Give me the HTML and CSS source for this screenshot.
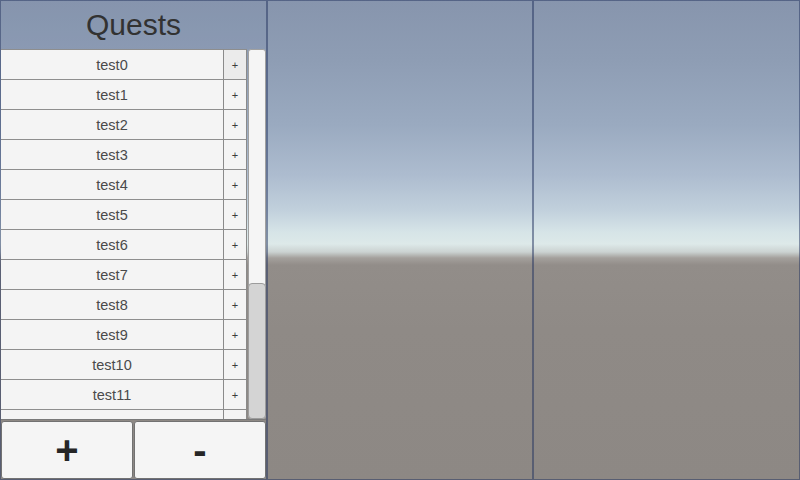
FILE: index.html
```html
<!DOCTYPE html>
<html>
<head>
<meta charset="utf-8">
<link rel="stylesheet" href="styles.css">
</head>
<body>
<div class="screen">
  <section class="panel quests">
    <header class="title">Quests</header>
    <div class="scroll">
      <div class="list">
        <div class="row"><div class="name">test0</div><div class="add first">+</div></div>
        <div class="row"><div class="name">test1</div><div class="add">+</div></div>
        <div class="row"><div class="name">test2</div><div class="add">+</div></div>
        <div class="row"><div class="name">test3</div><div class="add">+</div></div>
        <div class="row"><div class="name">test4</div><div class="add">+</div></div>
        <div class="row"><div class="name">test5</div><div class="add">+</div></div>
        <div class="row"><div class="name">test6</div><div class="add">+</div></div>
        <div class="row"><div class="name">test7</div><div class="add">+</div></div>
        <div class="row"><div class="name">test8</div><div class="add">+</div></div>
        <div class="row"><div class="name">test9</div><div class="add">+</div></div>
        <div class="row"><div class="name">test10</div><div class="add">+</div></div>
        <div class="row"><div class="name">test11</div><div class="add">+</div></div>
        <div class="row"><div class="name"></div><div class="add"></div></div>
      </div>
      <div class="scrollbar"><div class="track"></div><div class="handle"></div></div>
    </div>
    <div class="actions">
      <div class="btn">+</div>
      <div class="btn minus">-</div>
    </div>
  </section>
  <section class="panel"></section>
  <section class="panel"></section>
</div>
</body>
</html>
```
FILE: styles.css
```css
html, body {
  margin: 0;
  padding: 0;
}
body {
  width: 800px;
  height: 480px;
  overflow: hidden;
  font-family: "Liberation Sans", Arial, sans-serif;
  background: linear-gradient(to bottom,
    #8795ad 0px,
    #8e9db4 60px,
    #9aaac0 125px,
    #adbccf 175px,
    #c1d0dc 210px,
    #d6e4e7 232px,
    #dde9e9 244px,
    #cbd2d1 252px,
    #a4a09c 258px,
    #928d89 265px,
    #8f8a86 330px,
    #8d8884 480px);
}
.screen {
  display: grid;
  grid-template-columns: 267px 266px 267px;
  height: 480px;
}
.panel {
  box-sizing: border-box;
  border: 1px solid rgba(35, 52, 95, 0.5);
  height: 480px;
}
.quests {
  display: flex;
  flex-direction: column;
}
.title {
  height: 48px;
  display: flex;
  align-items: center;
  justify-content: center;
  font-size: 30px;
  color: #323232;
  background: rgba(120, 140, 180, 0.06);
}
.scroll {
  height: 370px;
  display: flex;
  overflow: hidden;
}
.list {
  width: 246px;
  display: flex;
  flex-direction: column;
}
.row {
  display: grid;
  grid-template-columns: 223px 23px;
  height: 30px;
  flex: none;
}
.name, .add {
  box-sizing: border-box;
  background: #f4f4f4;
  border-top: 1px solid #8e8e8e;
  border-right: 1px solid #8a8a8a;
  display: flex;
  align-items: center;
  justify-content: center;
  color: #4a4a4a;
}
.name {
  font-size: 14.5px;
  padding-top: 1px;
}
.add {
  font-size: 11px;
  color: #3c3c3c;
}
.add.first {
  background: #ebebeb;
}
.scrollbar {
  box-sizing: border-box;
  width: 18px;
  margin-left: 1px;
  height: 370px;
  display: flex;
  flex-direction: column;
  background: #f5f5f5;
  border: 1px solid #a0a0a0;
  border-radius: 3px;
}
.track {
  flex: 1;
}
.handle {
  box-sizing: border-box;
  height: 136px;
  margin: 0 -1px -1px -1px;
  background: #d4d4d4;
  border: 1px solid #9c9c9c;
  border-radius: 4px;
}
.actions {
  box-sizing: border-box;
  flex: 1;
  display: grid;
  grid-template-columns: 132px 132px;
  gap: 1px;
  border-top: 1px solid #7a7a7a;
  padding-top: 1px;
}
.btn {
  box-sizing: border-box;
  background: #f5f5f5;
  border: 1px solid #727272;
  border-radius: 3px;
  display: flex;
  align-items: center;
  justify-content: center;
  font-size: 40px;
  font-weight: bold;
  color: #262626;
}
```
